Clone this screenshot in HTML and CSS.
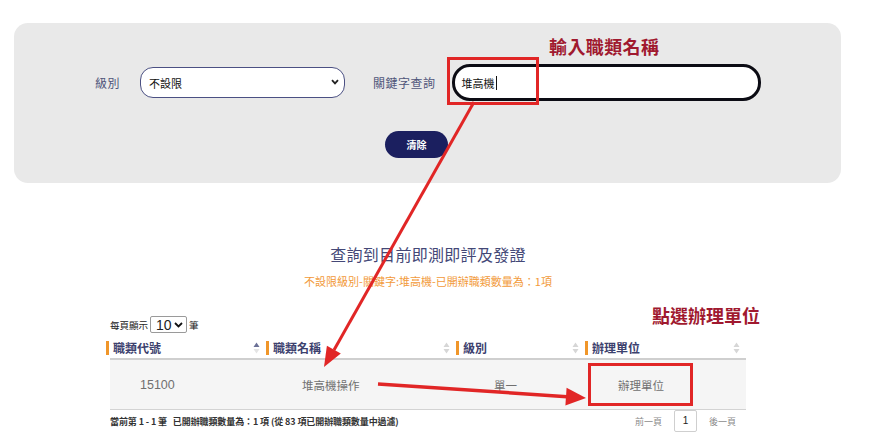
FILE: index.html
```html
<!DOCTYPE html>
<html lang="zh-Hant">
  <head>
    <meta charset="UTF-8" />
    <meta name="viewport" content="width=device-width, initial-scale=1.0" />
    <title>即測即評及發證查詢</title>
    <link rel="stylesheet" href="styles.css">
  </head>
  <body>
    <div class="page">
      <!-- 搜尋區塊 -->
      <section class="search-panel">
        <div class="note note-input">輸入職類名稱</div>
        <div class="mark mark-input"></div>

        <div class="search-row">
          <span class="field-label">級別</span>
          <div class="select-box">
            <span>不設限</span>
            <svg class="chevron" width="8" height="6" viewBox="0 0 8 6">
              <path d="M1 1.2 L4 4.4 L7 1.2" fill="none" stroke="#222" stroke-width="1.8" />
            </svg>
          </div>
          <span class="field-label keyword-label">關鍵字查詢</span>
          <div class="input-box">
            <span>堆高機</span><span class="caret"></span>
          </div>
        </div>

        <button class="btn-clear" type="button">清除</button>
      </section>

      <!-- 查詢結果 -->
      <section class="result">
        <h2 class="result-title">查詢到目前即測即評及發證</h2>
        <p class="result-summary">不設限級別-關鍵字:堆高機-已開辦職類數量為：1項</p>

        <div class="table-wrap">
          <div class="note note-unit">點選辦理單位</div>
          <div class="mark mark-unit"></div>

          <div class="page-size">
            <span>每頁顯示</span>
            <div class="size-box">
              <span>10</span>
              <svg width="9" height="6" viewBox="0 0 9 6">
                <path d="M1 1 L4.5 4.5 L8 1" fill="none" stroke="#111" stroke-width="1.8" />
              </svg>
            </div>
            <span>筆</span>
          </div>

          <div class="table-head">
            <div class="th">
              <span class="th-text">職類代號</span>
              <svg class="sort" width="7" height="12" viewBox="0 0 7 12">
                <path d="M3.5 0.5 L6.5 5 L0.5 5 Z" fill="#6b7096" />
                <path d="M3.5 11.5 L6.5 7 L0.5 7 Z" fill="#e4e4e4" />
              </svg>
            </div>
            <div class="th">
              <span class="th-text">職類名稱</span>
              <svg class="sort" width="7" height="12" viewBox="0 0 7 12">
                <path d="M3.5 0.5 L6.5 5 L0.5 5 Z" fill="#d6d6d6" />
                <path d="M3.5 11.5 L6.5 7 L0.5 7 Z" fill="#d6d6d6" />
              </svg>
            </div>
            <div class="th">
              <span class="th-text">級別</span>
              <svg class="sort" width="7" height="12" viewBox="0 0 7 12">
                <path d="M3.5 0.5 L6.5 5 L0.5 5 Z" fill="#d6d6d6" />
                <path d="M3.5 11.5 L6.5 7 L0.5 7 Z" fill="#d6d6d6" />
              </svg>
            </div>
            <div class="th">
              <span class="th-text">辦理單位</span>
              <svg class="sort" width="7" height="12" viewBox="0 0 7 12">
                <path d="M3.5 0.5 L6.5 5 L0.5 5 Z" fill="#d6d6d6" />
                <path d="M3.5 11.5 L6.5 7 L0.5 7 Z" fill="#d6d6d6" />
              </svg>
            </div>
          </div>

          <div class="table-row">
            <div class="td">15100</div>
            <div class="td">堆高機操作</div>
            <div class="td">單一</div>
            <div class="td">辦理單位</div>
          </div>

          <div class="table-foot">
            <span class="foot-info">當前第 1 - 1 筆&nbsp;&nbsp;&nbsp;已開辦職類數量為：1 項 (從 83 項已開辦職類數量中過濾)</span>
            <div class="pager">
              <span class="pager-link">前一頁</span>
              <span class="pager-num">1</span>
              <span class="pager-link">後一頁</span>
            </div>
          </div>
        </div>
      </section>

      <!-- 標示箭頭 -->
      <svg class="arrows" width="869" height="441" viewBox="0 0 869 441">
        <line x1="474" y1="102" x2="334" y2="350" stroke="#e12626" stroke-width="3" />
        <polygon points="324,367 326.9,345.7 340.8,353.5" fill="#e12626" />
        <line x1="378" y1="384" x2="567" y2="396.7" stroke="#e12626" stroke-width="3.5" />
        <polygon points="586,398 566.6,387.7 565.4,405.6" fill="#e12626" />
      </svg>
    </div>
  </body>
</html>
```

FILE: styles.css
```css
body {
  margin: 0;
  background-color: #fff;
  font-family: "Noto Sans CJK TC", "Noto Sans", sans-serif;
  color: #333;
}

.page {
  position: relative;
  width: 869px;
  height: 441px;
  overflow: hidden;
}

/* 搜尋區塊 */
.search-panel {
  position: relative;
  box-sizing: border-box;
  margin: 23px 0 0 14px;
  width: 827px;
  height: 160px;
  padding: 41px 0 0 81px;
  background-color: #e9e9e9;
  border-radius: 14px;
}

.search-row {
  display: flex;
  align-items: center;
  height: 37px;
}

.field-label {
  font-size: 12px;
  line-height: 16px;
  color: #50557a;
  letter-spacing: 0.5px;
}

.select-box {
  position: relative;
  box-sizing: border-box;
  display: flex;
  align-items: center;
  margin-left: 20px;
  width: 205px;
  height: 31px;
  padding-left: 8px;
  background-color: #fff;
  border: 1.5px solid #4b5083;
  border-radius: 13px;
  font-size: 11px;
  color: #111;
}

.chevron {
  position: absolute;
  right: 5px;
  top: 11px;
}

.keyword-label {
  margin-left: 28px;
}

.input-box {
  box-sizing: border-box;
  display: flex;
  align-items: center;
  margin-left: 16px;
  width: 309px;
  height: 37px;
  padding-left: 7px;
  background-color: #fff;
  border: 3px solid #0c0c14;
  border-radius: 18px;
  font-size: 11px;
  color: #111;
}

.caret {
  display: inline-block;
  width: 1px;
  height: 14px;
  margin-left: 1px;
  background-color: #111;
}

.btn-clear {
  display: block;
  margin: 30px 0 0 290px;
  width: 63px;
  height: 27px;
  padding: 0;
  border: none;
  border-radius: 14px;
  background-color: #1b1f5f;
  color: #fff;
  font-family: inherit;
  font-size: 10px;
  font-weight: bold;
}

/* 紅色標示 */
.note {
  position: absolute;
  white-space: nowrap;
  font-size: 18px;
  line-height: 22px;
  font-weight: bold;
  color: #a0192f;
  letter-spacing: 0.4px;
}

.note-input {
  left: 535px;
  top: 12px;
}

.mark {
  position: absolute;
  box-sizing: border-box;
  border: 3px solid #e12626;
}

.mark-input {
  left: 433px;
  top: 34px;
  width: 92px;
  height: 48px;
}

/* 查詢結果 */
.result {
  width: 856px;
}

.result-title {
  margin: 60px 0 0;
  text-align: center;
  font-size: 16px;
  line-height: 22px;
  font-weight: normal;
  color: #444877;
  letter-spacing: 0.3px;
}

.result-summary {
  margin: 8px 0 0;
  text-align: center;
  font-size: 11px;
  line-height: 16px;
  color: #f29a3a;
}

.table-wrap {
  position: relative;
  margin: 27px 0 0 106px;
  width: 640px;
}

.note-unit {
  left: 546px;
  top: -12px;
  font-size: 18px;
  letter-spacing: 0;
}

.mark-unit {
  left: 482px;
  top: 47px;
  width: 105px;
  height: 43px;
}

.page-size {
  display: flex;
  align-items: center;
  gap: 2px;
  padding-left: 4px;
  height: 17px;
  font-size: 9.5px;
  color: #222;
}

.size-box {
  box-sizing: border-box;
  display: flex;
  align-items: center;
  justify-content: space-between;
  width: 37px;
  height: 17px;
  padding: 0 3px 0 5px;
  border: 1px solid #9a9a9a;
  border-radius: 2px;
  background-color: #fff;
  font-family: "Liberation Sans", sans-serif;
  font-size: 14px;
}

.table-head {
  display: grid;
  grid-template-columns: 160px 190px 129px 161px;
  margin-top: 5px;
  height: 20px;
}

.th {
  display: flex;
  align-items: center;
  justify-content: space-between;
  padding-right: 6px;
  border-left: 3px solid #f0962a;
  height: 14px;
  margin-top: 3px;
}

.th-text {
  padding-left: 4px;
  font-size: 12px;
  line-height: 14px;
  font-weight: bold;
  color: #3c416e;
}

.table-row {
  display: grid;
  grid-template-columns: 156px 190px 129px 161px;
  margin-left: 4px;
  height: 49px;
  align-items: center;
  background-color: #f5f5f5;
  border-top: 2px solid #cfcfcf;
  border-bottom: 1px solid #d3d3d3;
}

.td {
  font-size: 11.5px;
  color: #707070;
}

.td:nth-child(1) {
  padding-left: 30px;
  font-family: "Liberation Sans", sans-serif;
  font-size: 12.5px;
}

.td:nth-child(2) {
  padding-left: 36px;
}

.td:nth-child(3) {
  padding-left: 38px;
}

.td:nth-child(4) {
  padding-left: 33px;
}

.table-foot {
  display: flex;
  align-items: center;
  justify-content: space-between;
  margin-left: 4px;
  height: 22px;
}

.foot-info {
  font-size: 9px;
  font-weight: bold;
  color: #333;
  letter-spacing: -0.1px;
}

.pager {
  display: flex;
  align-items: center;
  gap: 12px;
  padding-right: 10px;
}

.pager-link {
  font-size: 9px;
  color: #8a8a8a;
}

.pager-num {
  box-sizing: border-box;
  width: 23px;
  height: 22px;
  line-height: 20px;
  text-align: center;
  border: 1px solid #cfcfcf;
  border-radius: 2px;
  font-family: "Liberation Sans", sans-serif;
  font-size: 10px;
  color: #222;
}

.arrows {
  position: absolute;
  top: 0;
  left: 0;
  pointer-events: none;
}
```
